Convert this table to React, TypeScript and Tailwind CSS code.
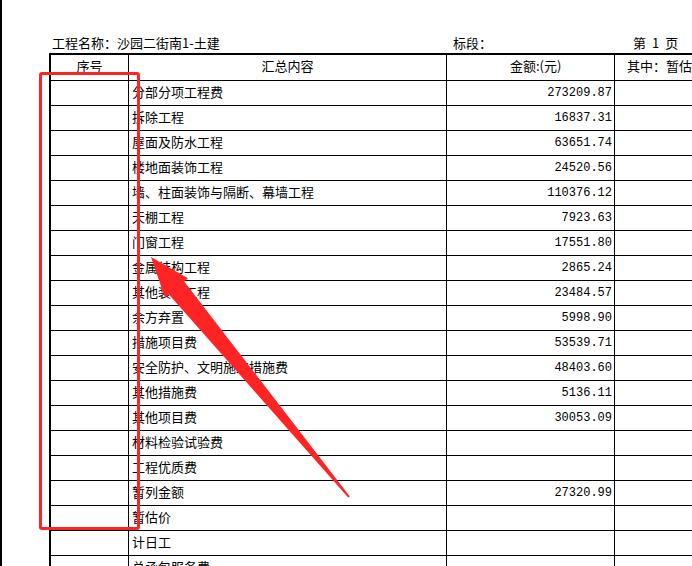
import React from "react";

const rows: [string, string][] = [
  ["分部分项工程费", "273209.87"],
  ["拆除工程", "16837.31"],
  ["屋面及防水工程", "63651.74"],
  ["楼地面装饰工程", "24520.56"],
  ["墙、柱面装饰与隔断、幕墙工程", "110376.12"],
  ["天棚工程", "7923.63"],
  ["门窗工程", "17551.80"],
  ["金属结构工程", "2865.24"],
  ["其他装饰工程", "23484.57"],
  ["余方弃置", "5998.90"],
  ["措施项目费", "53539.71"],
  ["安全防护、文明施工措施费", "48403.60"],
  ["其他措施费", "5136.11"],
  ["其他项目费", "30053.09"],
  ["材料检验试验费", ""],
  ["工程优质费", ""],
  ["暂列金额", "27320.99"],
  ["暂估价", ""],
  ["计日工", ""],
  ["总承包服务费", ""],
];

const cjk = { fontFamily: '"Noto Sans CJK SC", "Noto Sans", sans-serif' };
const mono = { fontFamily: '"Liberation Mono", "DejaVu Sans Mono", monospace' };

function Arrow() {
  const T = [149, 257];
  const tail = [347, 497];
  const dx = tail[0] - T[0];
  const dy = tail[1] - T[1];
  const len = Math.hypot(dx, dy);
  const u = [dx / len, dy / len];
  const n = [u[1], -u[0]];
  const headLen = 40;
  const headHalf = 15;
  const neckHalf = 10;
  const tailHalf = 1;
  const N = [T[0] + headLen * u[0], T[1] + headLen * u[1]];
  const p = (c: number[], s: number) => [c[0] + s * n[0], c[1] + s * n[1]];
  const pts = [
    T,
    p(N, headHalf),
    p(N, neckHalf),
    p(tail, tailHalf),
    p(tail, -tailHalf),
    p(N, -neckHalf),
    p(N, -headHalf),
  ]
    .map((q) => `${q[0].toFixed(1)},${q[1].toFixed(1)}`)
    .join(" ");
  return (
    <svg className="absolute left-0 top-0 pointer-events-none" width={692} height={566}>
      <polygon points={pts} fill="#ff2424" />
    </svg>
  );
}

export default function App() {
  return (
    <div className="relative w-[692px] h-[566px] overflow-hidden bg-white border-l-2 border-black text-black" style={cjk}>
      <div className="pt-[35px] pl-[47px]">
        <div className="flex items-center h-[18px] pb-[4px] text-[13px] leading-none whitespace-nowrap">
          <span className="w-[404px] pl-[3px]">工程名称：沙园二街南1-土建</span>
          <span className="w-[180px]">标段：</span>
          <span className="flex gap-[6px]">
            <span>第</span>
            <span>1</span>
            <span>页</span>
          </span>
        </div>
        <div className="w-[800px] border-l-2 border-t-2 border-black text-[13px] leading-none">
          <div className="flex h-[26px] border-b border-black">
            <div className="w-[78px] border-r border-black flex items-center justify-center pb-[5px]">序号</div>
            <div className="w-[318px] border-r border-black flex items-center justify-center pb-[5px]">汇总内容</div>
            <div className="w-[168px] border-r border-black flex items-center pl-[63px] pb-[5px]">金额:(元)</div>
            <div className="w-[200px] flex items-center pl-[12px] pb-[5px] whitespace-nowrap">其中：暂估价</div>
          </div>
          {rows.map(([name, amt], i) => (
            <div key={i} className="flex h-[25px] border-b border-black">
              <div className="w-[78px] border-r border-black" />
              <div className="w-[318px] border-r border-black flex items-center pl-[3px] pb-[3px] whitespace-nowrap">{name}</div>
              <div className="w-[168px] border-r border-black flex items-center justify-end pr-[2px] pb-[1px] text-[12px]" style={mono}>
                {amt}
              </div>
              <div className="w-[200px]" />
            </div>
          ))}
        </div>
      </div>
      <div className="absolute left-[37px] top-[72px] w-[101px] h-[458px] border-[3px] border-[#ff2424] rounded-[3px]" />
      <Arrow />
    </div>
  );
}
